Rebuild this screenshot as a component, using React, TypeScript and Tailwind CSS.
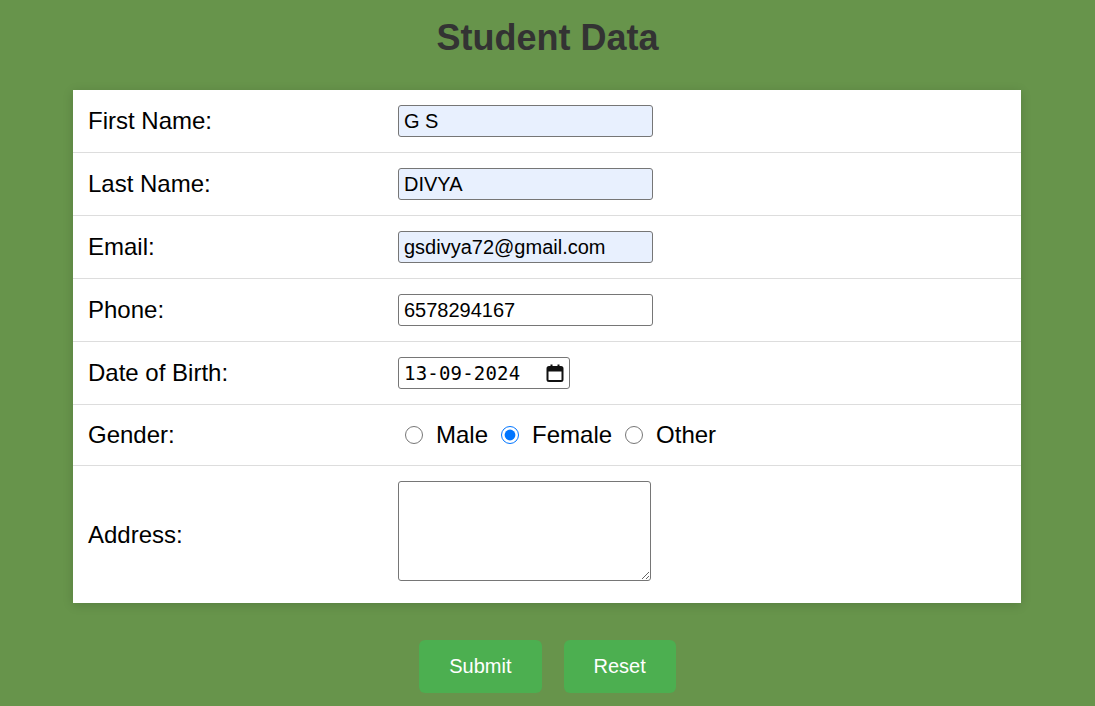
import { useState } from "react";

const font = { fontFamily: '"Liberation Sans", Arial, sans-serif' };

function TextRow({
  label,
  value,
  autofill,
}: {
  label: string;
  value: string;
  autofill?: boolean;
}) {
  return (
    <div className="flex h-[63px] items-center border-b border-[#dddddd]">
      <div className="w-[325px] pl-[15px] text-[24px] text-black">{label}</div>
      <input
        type="text"
        defaultValue={value}
        className={`h-[32px] w-[255px] rounded-[3px] border border-[#767676] px-[5px] text-[20px] text-black outline-none ${
          autofill ? "bg-[#e8f0fe]" : "bg-white"
        }`}
        style={font}
      />
    </div>
  );
}

function Radio({ label, checked }: { label: string; checked?: boolean }) {
  return (
    <label className="flex items-center">
      <input
        type="radio"
        name="gender"
        defaultChecked={checked}
        className="ml-[7px] mr-[13px] h-[18px] w-[18px] accent-[#0075ff]"
      />
      <span className="text-[24px] text-black">{label}</span>
    </label>
  );
}

export default function App() {
  const [dob] = useState("13-09-2024");

  return (
    <div className="min-h-[706px] bg-[#67944b] pt-[17px]" style={font}>
      <h2 className="text-center text-[36px] font-bold leading-[41px] text-[#333333]">
        Student Data
      </h2>

      <div className="ml-[73px] mt-[32px] w-[948px] bg-white shadow-[0_2px_10px_rgba(0,0,0,0.15)]">
        <TextRow label="First Name:" value="G S" autofill />
        <TextRow label="Last Name:" value="DIVYA" autofill />
        <TextRow label="Email:" value="gsdivya72@gmail.com" autofill />
        <TextRow label="Phone:" value="6578294167" />

        {/* Date of birth */}
        <div className="flex h-[63px] items-center border-b border-[#dddddd]">
          <div className="w-[325px] pl-[15px] text-[24px] text-black">Date of Birth:</div>
          <div className="flex h-[32px] w-[172px] items-center justify-between rounded-[3px] border border-[#767676] bg-white pl-[5px] pr-[4px]">
            <span
              className="text-[19px] tracking-[0.2px] text-black"
              style={{ fontFamily: '"DejaVu Sans Mono", "Liberation Mono", monospace' }}
            >
              {dob}
            </span>
            <svg width="20" height="20" viewBox="0 0 20 20" fill="none">
              <rect x="2.5" y="4" width="15" height="14" rx="1.5" stroke="#111" strokeWidth="2" />
              <rect x="2.5" y="4" width="15" height="4.5" fill="#111" />
              <rect x="5.5" y="1.5" width="2" height="3" fill="#111" />
              <rect x="12.5" y="1.5" width="2" height="3" fill="#111" />
            </svg>
          </div>
        </div>

        {/* Gender */}
        <div className="flex h-[61px] items-center border-b border-[#dddddd]">
          <div className="w-[325px] pl-[15px] text-[24px] text-black">Gender:</div>
          <div className="flex items-center gap-[6px]">
            <Radio label="Male" />
            <Radio label="Female" checked />
            <Radio label="Other" />
          </div>
        </div>

        {/* Address */}
        <div className="flex h-[137px] items-center">
          <div className="w-[325px] pl-[15px] text-[24px] text-black">Address:</div>
          <textarea className="mt-[15px] h-[100px] w-[253px] self-start rounded-[3px] border border-[#767676] bg-white text-[16px] outline-none" />
        </div>
      </div>

      <div className="mt-[37px] flex justify-center gap-[22px]">
        <button className="rounded-[6px] bg-[#4caf50] px-[30px] py-[15px] text-[20px] leading-[23px] text-white">
          Submit
        </button>
        <button className="rounded-[6px] bg-[#4caf50] px-[30px] py-[15px] text-[20px] leading-[23px] text-white">
          Reset
        </button>
      </div>
    </div>
  );
}
